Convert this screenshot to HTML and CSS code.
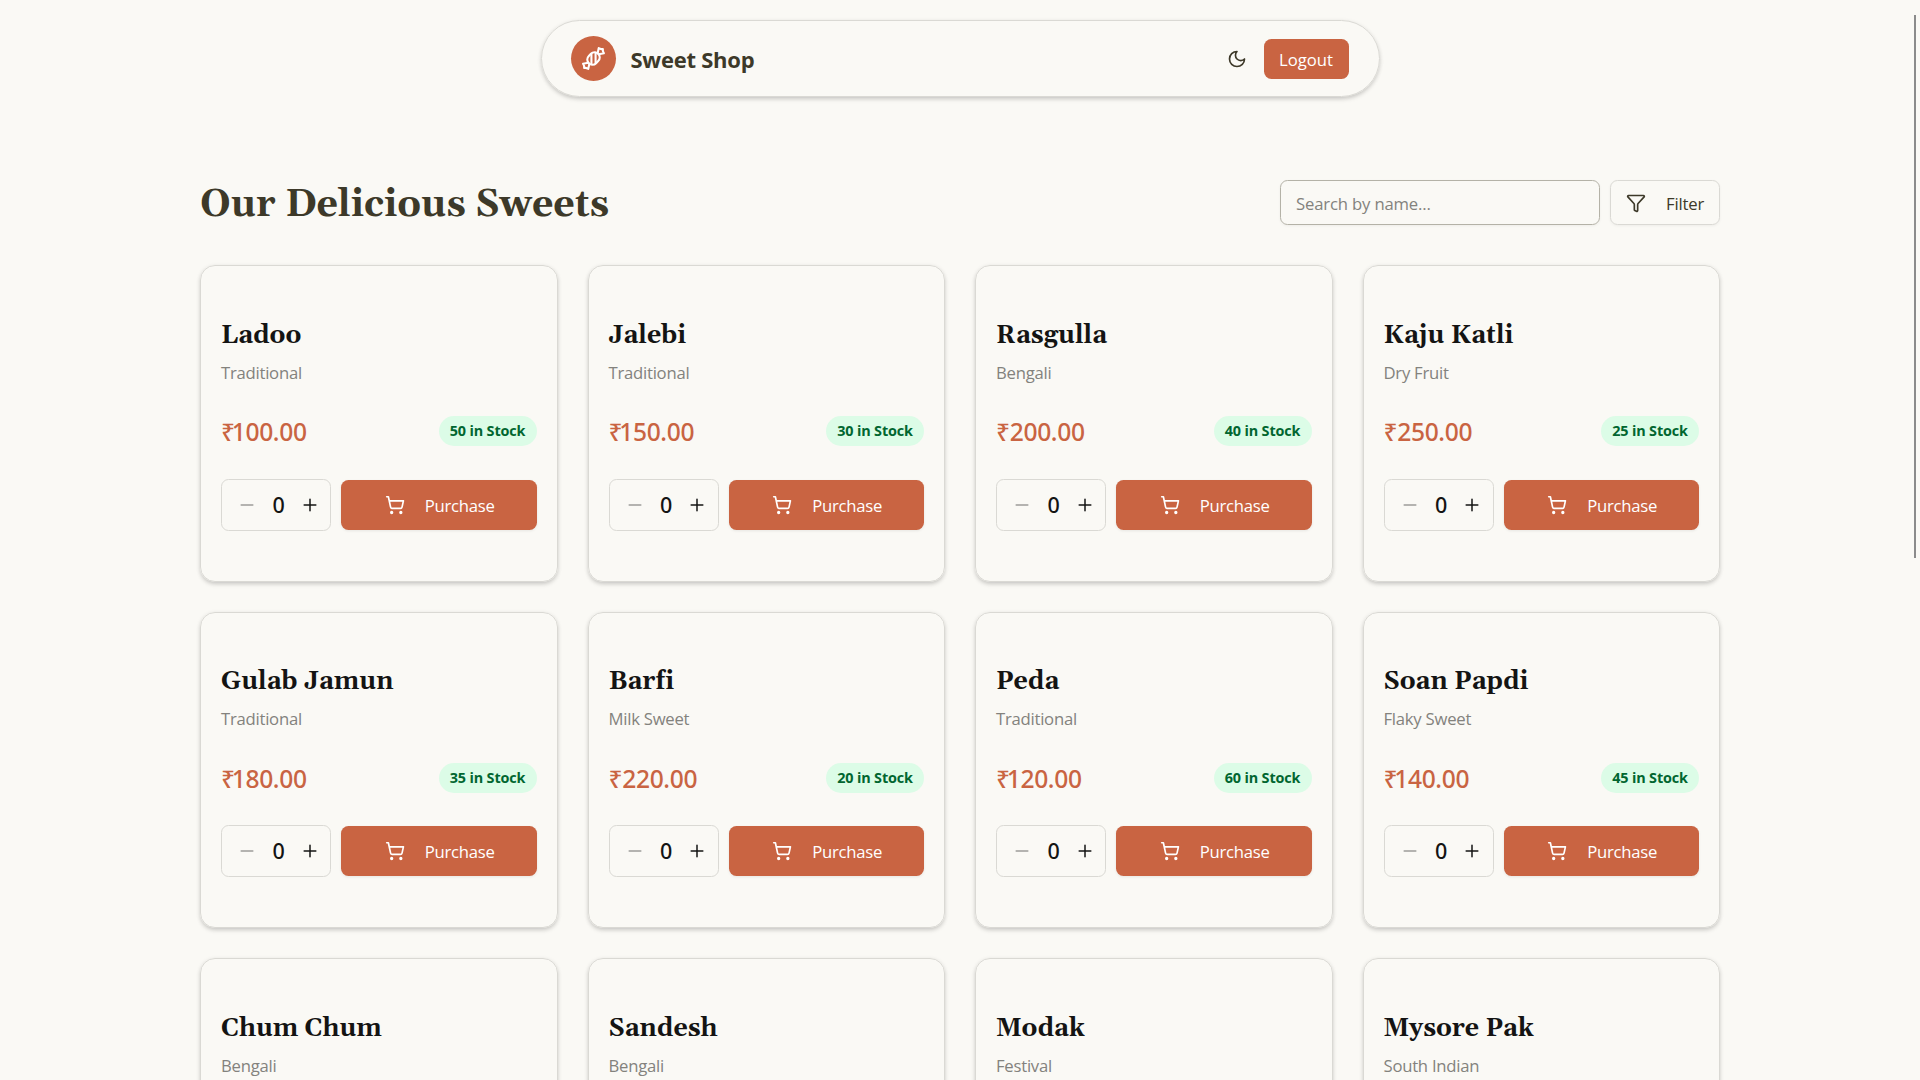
FILE: index.html
```html
<!DOCTYPE html>
<html lang="en">
<head>
<meta charset="utf-8">
<title>Sweet Shop</title>
<link rel="stylesheet" href="styles.css">
</head>
<body>
<svg class="sprite" aria-hidden="true">
  <symbol id="cart" viewBox="0 0 24 24"><circle cx="8" cy="21" r="1"/><circle cx="19" cy="21" r="1"/><path d="M2.05 2.05h2l2.66 12.42a2 2 0 0 0 2 1.58h9.78a2 2 0 0 0 1.95-1.57l1.65-7.43H5.12"/></symbol>
  <symbol id="minus" viewBox="0 0 24 24"><path d="M5 12h14"/></symbol>
  <symbol id="plus" viewBox="0 0 24 24"><path d="M5 12h14M12 5v14"/></symbol>
</svg>
<header class="navbar">
  <div class="brand">
    <span class="brand-mark"><svg class="icon" viewBox="0 0 24 24"><path d="m9.5 7.5-2 2a4.95 4.95 0 1 0 7 7l2-2a4.95 4.95 0 1 0-7-7Z"/><path d="M14 6.5v10"/><path d="M10 7.5v10"/><path d="m16 7 1-5 1.37.68A3 3 0 0 0 19.7 3H21v1.3c0 .46.1.92.32 1.33L22 7l-5 1"/><path d="m8 17-1 5-1.37-.68A3 3 0 0 0 4.3 21H3v-1.3a3 3 0 0 0-.32-1.33L2 17l5-1"/></svg></span>
    <span class="brand-name">Sweet Shop</span>
  </div>
  <div class="nav-actions">
    <svg class="icon" viewBox="0 0 24 24"><path d="M12 3a6 6 0 0 0 9 9 9 9 0 1 1-9-9Z"/></svg>
    <button class="logout">Logout</button>
  </div>
</header>
<main class="page">
  <div class="toolbar">
    <h1 class="heading">Our Delicious Sweets</h1>
    <div class="tools">
      <input class="search" type="text" placeholder="Search by name...">
      <button class="filter"><svg class="icon" viewBox="0 0 24 24"><path d="M10 20a1 1 0 0 0 .553.895l2 1A1 1 0 0 0 14 21v-7a2 2 0 0 1 .517-1.341L21.74 4.67A1 1 0 0 0 21 3H3a1 1 0 0 0-.742 1.67l7.225 7.989A2 2 0 0 1 10 14z"/></svg><span class="label">Filter</span></button>
    </div>
  </div>
  <section class="grid" id="grid"></section>
</main>
<div class="scroll-thumb"></div>
<script src="app.js"></script>
</body>
</html>
```
FILE: styles.css
```css
* { box-sizing: border-box; margin: 0; }
html, body { height: 100%; overflow: hidden; }
body {
  background: #faf9f5;
  color: #3d3929;
  font: 16.7px/25px "Open Sans", sans-serif;
  letter-spacing: -0.17px;
}
button, input { font: inherit; letter-spacing: inherit; color: inherit; }
.sprite { display: none; }
.icon { width: 20px; height: 20px; flex: none; fill: none; stroke: currentColor; stroke-width: 2; stroke-linecap: round; stroke-linejoin: round; }

.navbar {
  width: 839px; height: 77px; margin: 20px auto 0; padding: 0 30px 0 29px;
  display: flex; align-items: center; justify-content: space-between;
  border: 1px solid #dad9d4; border-radius: 39px;
  box-shadow: 0 1px 4px rgba(0,0,0,.1), 0 3px 5px -1px rgba(0,0,0,.14);
}
.brand, .nav-actions, .tools { display: flex; align-items: center; }
.brand { gap: 15px; }
.brand-mark { width: 45px; height: 45px; border-radius: 50%; background: #c96442; color: #fff; display: grid; place-items: center; }
.brand-mark .icon { width: 25px; height: 25px; }
.brand-name { font-size: 22px; font-weight: 700; letter-spacing: -0.25px; padding-top: 2px; }
.nav-actions { gap: 17px; }
.logout { width: 85px; height: 40px; padding: 1px 0 0; border: 0; border-radius: 7.5px; background: #c96442; color: #fff; letter-spacing: 0; }

.page { width: 1520px; margin: 83px auto 0; }
.toolbar { height: 45px; display: flex; align-items: center; justify-content: space-between; }
.heading { padding-top: 6px; font: 700 37.5px/45px Gelasio, Georgia, serif; letter-spacing: 0; }
.tools { gap: 10px; }
.search { width: 320px; height: 45px; padding: 1px 15px 0; border: 1px solid #b4b2a7; border-radius: 7.5px; background: transparent; box-shadow: 0 1px 3px rgba(0,0,0,.05); }
.search::placeholder { color: #83827d; opacity: 1; }
.filter { width: 110px; height: 45px; padding: 0 15px; display: flex; align-items: center; gap: 20px; border: 1px solid #dad9d4; border-radius: 7.5px; background: transparent; box-shadow: 0 1px 3px rgba(0,0,0,.05); }
.label { padding-top: 2px; }

.grid { margin-top: 40px; display: grid; grid-template-columns: repeat(4, 1fr); gap: 30px; }
.card {
  height: 316.5px; padding: 52.9px 20px 0;
  border: 1px solid #dad9d4; border-radius: 15px;
  box-shadow: 0 1px 4px rgba(0,0,0,.1), 0 3px 5px -1px rgba(0,0,0,.14);
}
.name { font: 700 25px/35px Gelasio, Georgia, serif; letter-spacing: 0; font-variant-ligatures: none; color: #141413; }
.category { margin-top: 5.8px; color: #83827d; letter-spacing: -0.25px; }
.row { display: flex; align-items: center; justify-content: space-between; }
.price-row { height: 35px; margin-top: 29px; }
.price { padding-top: 1.5px; font: 500 24.6px/35px "Noto Sans", sans-serif; letter-spacing: -0.35px; color: #c96442; }
.price-tight .rupee { margin-right: -3px; }
.badge { width: 98px; height: 30px; text-align: center; border-radius: 15px; background: #dcfce7; color: #016630; font-size: 14.4px; font-weight: 700; line-height: 30px; letter-spacing: -0.15px; }
.buy-row { margin-top: 30px; gap: 10px; }
.stepper { width: 110px; height: 52px; padding: 0 10px 0 15px; display: flex; align-items: center; justify-content: space-between; border: 1px solid #dad9d4; border-radius: 7.5px; color: #141413; }
.stepper .minus { opacity: .4; }
.stepper .icon { stroke-width: 1.8; }
.qty { font: 500 21.5px/50px "Noto Sans", sans-serif; }
.purchase { flex: 1; height: 50px; padding: 0 0 0 2px; display: flex; align-items: center; justify-content: center; gap: 20px; border: 0; border-radius: 7.5px; background: #c96442; color: #fff; letter-spacing: -0.25px; box-shadow: 0 1px 3px rgba(0,0,0,.08); }
.purchase .label { padding-top: 1px; }
.scroll-thumb { position: fixed; top: 15px; right: 4px; width: 2px; height: 543px; background: #8b8b8b; }
```
FILE: app.js
```js
const sweets = [
  ["Ladoo", "Traditional", 100, 50], ["Jalebi", "Traditional", 150, 30],
  ["Rasgulla", "Bengali", 200, 40], ["Kaju Katli", "Dry Fruit", 250, 25],
  ["Gulab Jamun", "Traditional", 180, 35], ["Barfi", "Milk Sweet", 220, 20],
  ["Peda", "Traditional", 120, 60], ["Soan Papdi", "Flaky Sweet", 140, 45],
  ["Chum Chum", "Bengali"], ["Sandesh", "Bengali"],
  ["Modak", "Festival"], ["Mysore Pak", "South Indian"]
];
const purchasePanel = (price, stock) => `
    <div class="row price-row"><span class="price${price < 200 ? " price-tight" : ""}"><span class="rupee">₹</span>${price.toFixed(2)}</span><span class="badge">${stock} in Stock</span></div>
    <div class="row buy-row">
      <div class="stepper"><svg class="icon minus"><use href="#minus"/></svg><span class="qty">0</span><svg class="icon"><use href="#plus"/></svg></div>
      <button class="purchase"><svg class="icon"><use href="#cart"/></svg><span class="label">Purchase</span></button>
    </div>`;
document.getElementById("grid").innerHTML = sweets.map(([name, category, price, stock]) => `
  <article class="card">
    <h2 class="name">${name}</h2>
    <p class="category">${category}</p>${price ? purchasePanel(price, stock) : ""}
  </article>`).join("");
```
